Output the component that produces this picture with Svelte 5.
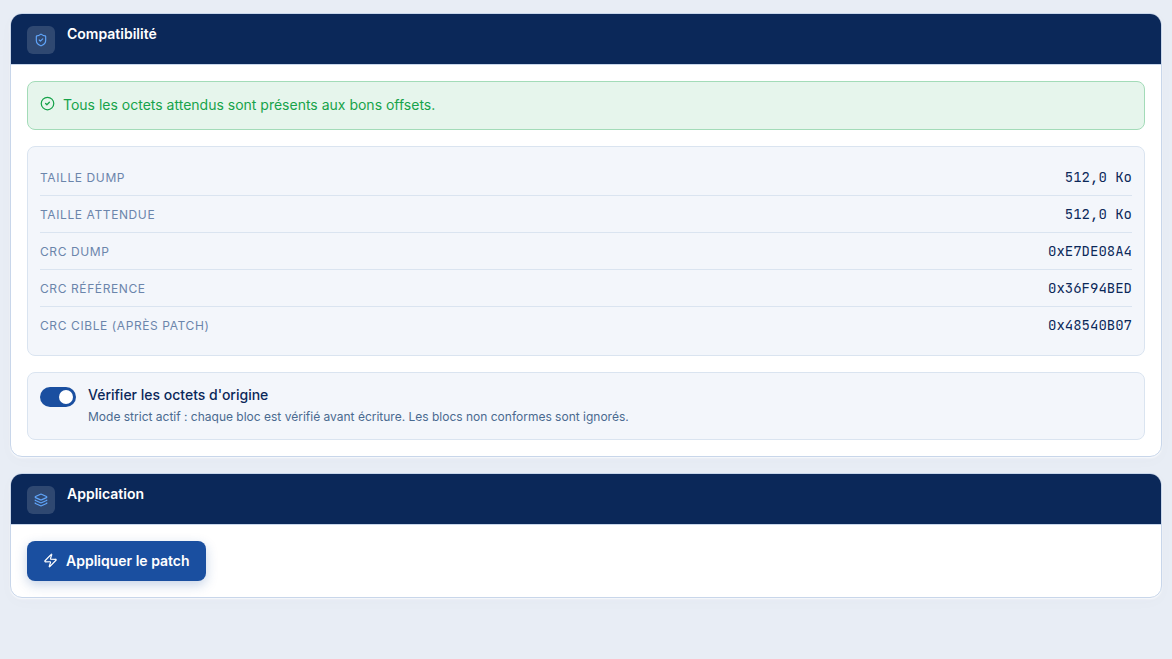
<script>
    let strict = true;

    const rows = [
        { label: "Taille dump", value: "512,0 Ko" },
        { label: "Taille attendue", value: "512,0 Ko" },
        { label: "CRC dump", value: "0xE7DE08A4" },
        { label: "CRC référence", value: "0x36F94BED" },
        { label: "CRC cible (après patch)", value: "0x48540B07" },
    ];
</script>

<main>
    <section class="card">
        <header>
            <span class="card-icon">
                <svg class="icon" width="14" height="14" viewBox="0 0 24 24" aria-hidden="true">
                    <path d="M20 13c0 5-3.5 7.5-7.66 8.95a1 1 0 0 1-.67-.01C7.5 20.5 4 18 4 13V6a1 1 0 0 1 1-1c2 0 4.5-1.2 6.24-2.72a1.17 1.17 0 0 1 1.52 0C14.51 3.81 17 5 19 5a1 1 0 0 1 1 1z" />
                    <path d="m9 12 2 2 4-4" />
                </svg>
            </span>
            <h2>Compatibilité</h2>
        </header>
        <div class="card-body">
            <div class="alert" role="status">
                <svg class="icon" width="15" height="15" viewBox="0 0 24 24" aria-hidden="true">
                    <circle cx="12" cy="12" r="10" />
                    <path d="m9 12 2 2 4-4" />
                </svg>
                <span>Tous les octets attendus sont présents aux bons offsets.</span>
            </div>

            <dl class="panel">
                {#each rows as row}
                    <div class="row">
                        <dt>{row.label}</dt>
                        <dd>{row.value}</dd>
                    </div>
                {/each}
            </dl>

            <label class="panel toggle">
                <input type="checkbox" role="switch" bind:checked={strict} />
                <span class="toggle-text">
                    <span class="toggle-title">Vérifier les octets d'origine</span>
                    <span class="toggle-hint">
                        {#if strict}
                            Mode strict actif : chaque bloc est vérifié avant écriture. Les blocs non conformes sont ignorés.
                        {:else}
                            Mode strict inactif : les blocs sont écrits sans vérification.
                        {/if}
                    </span>
                </span>
            </label>
        </div>
    </section>

    <section class="card">
        <header>
            <span class="card-icon">
                <svg class="icon" width="14" height="14" viewBox="0 0 24 24" aria-hidden="true">
                    <path d="M12.83 2.18a2 2 0 0 0-1.66 0L2.6 6.08a1 1 0 0 0 0 1.83l8.58 3.91a2 2 0 0 0 1.66 0l8.58-3.9a1 1 0 0 0 0-1.83z" />
                    <path d="M2 12a1 1 0 0 0 .58.91l8.6 3.91a2 2 0 0 0 1.65 0l8.58-3.9A1 1 0 0 0 22 12" />
                    <path d="M2 17a1 1 0 0 0 .58.91l8.6 3.91a2 2 0 0 0 1.65 0l8.58-3.9A1 1 0 0 0 22 17" />
                </svg>
            </span>
            <h2>Application</h2>
        </header>
        <div class="card-body">
            <button type="button" class="btn">
                <svg class="icon" width="15" height="15" viewBox="0 0 24 24" aria-hidden="true">
                    <path d="M4 14a1 1 0 0 1-.78-1.63l9.9-10.2a.5.5 0 0 1 .86.46l-1.92 6.02A1 1 0 0 0 13 10h7a1 1 0 0 1 .78 1.63l-9.9 10.2a.5.5 0 0 1-.86-.46l1.92-6.02A1 1 0 0 0 11 14z" />
                </svg>
                Appliquer le patch
            </button>
        </div>
    </section>
</main>

<style>
    :global(body) {
        background: #e8edf5;
        color: #0b2859;
        font-family: Inter, "Liberation Sans", sans-serif;
        font-size: 14px;
    }

    main {
        display: flex;
        flex-direction: column;
        gap: 16px;
        padding: 13px 10px;
    }

    .icon {
        display: block;
        flex-shrink: 0;
        fill: none;
        stroke: currentColor;
        stroke-width: 2;
        stroke-linecap: round;
        stroke-linejoin: round;
    }

    /* CARDS */
    .card {
        overflow: hidden;
        background: #fff;
        border: 1px solid #c8d6ea;
        border-radius: 12px;
        box-shadow: 0 1px 2px rgba(255, 255, 255, 0.8), 0 4px 16px rgba(11, 40, 89, 0.02);
    }

    header {
        display: flex;
        align-items: flex-start;
        gap: 12px;
        padding: 12px 16px 10px;
        background: #0b2859;
        border-bottom: 1px solid #c8d6ea;
    }

    .card-icon {
        display: flex;
        align-items: center;
        justify-content: center;
        width: 28px;
        height: 28px;
        border-radius: 6px;
        background: rgba(255, 255, 255, 0.15);
        color: #60a5fa;
    }

    h2 {
        margin: 0;
        color: #fff;
        font-size: 14px;
        font-weight: 600;
        line-height: 16px;
    }

    .card-body {
        display: flex;
        flex-direction: column;
        align-items: stretch;
        gap: 16px;
        padding: 16px;
    }

    .alert {
        display: flex;
        gap: 8px;
        padding: 12px 12px 14px;
        border: 1px solid #a3dbb8;
        border-radius: 8px;
        background: #e6f5ec;
        color: #16a34a;
        line-height: 21px;
    }

    .alert .icon {
        margin-top: 2px;
    }

    .panel {
        margin: 0;
        padding: 12px;
        border: 1px solid #dae4f0;
        border-radius: 8px;
        background: #f3f6fb;
    }

    .row {
        display: flex;
        align-items: center;
        justify-content: space-between;
        gap: 12px;
        height: 36px;
        border-bottom: 1px solid #dae4f0;
    }

    .row:last-child {
        border-bottom: 0;
    }

    dt {
        color: #6b85ab;
        font-size: 12px;
        letter-spacing: 0.05em;
        text-transform: uppercase;
    }

    dd {
        margin: 0;
        font-family: "JetBrains Mono", "Liberation Mono", monospace;
        font-size: 14px;
    }

    /* SWITCH */
    .toggle {
        display: flex;
        align-items: flex-start;
        gap: 12px;
        cursor: pointer;
    }

    .toggle input {
        display: flex;
        align-items: center;
        flex-shrink: 0;
        appearance: none;
        box-sizing: border-box;
        width: 36px;
        height: 20px;
        margin: 2px 0 0;
        padding: 3px;
        border-radius: 10px;
        background: #a9b9d0;
        cursor: pointer;
    }

    .toggle input::before {
        content: "";
        width: 14px;
        height: 14px;
        border-radius: 50%;
        background: #fff;
    }

    .toggle input:checked {
        justify-content: flex-end;
        background: #1a4fa0;
    }

    .toggle-text {
        display: flex;
        flex-direction: column;
        gap: 2px;
    }

    .toggle-title {
        font-weight: 500;
        line-height: 20px;
    }

    .toggle-hint {
        color: #4a6a90;
        font-size: 12px;
        line-height: 20px;
    }

    .btn {
        display: flex;
        align-items: center;
        align-self: flex-start;
        gap: 8px;
        padding: 11px 16px 12px;
        border: 0;
        border-radius: 8px;
        background: #1a4fa0;
        box-shadow: 0 4px 12px rgba(26, 79, 160, 0.25);
        color: #fff;
        font-family: inherit;
        font-size: 14px;
        font-weight: 600;
        line-height: 17px;
        cursor: pointer;
    }

    .btn:hover {
        background: #0b2859;
    }
</style>
